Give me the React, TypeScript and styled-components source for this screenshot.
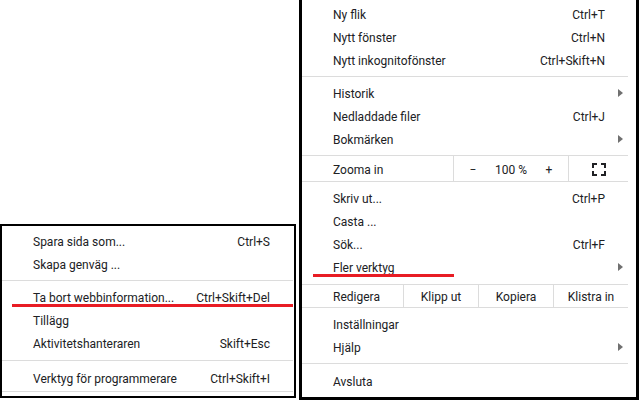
import React from 'react';
import styled, { createGlobalStyle } from 'styled-components';

const GlobalStyle = createGlobalStyle`
  html, body { margin: 0; padding: 0; background: #fff; }
  body { font-family: Roboto, "Noto Sans", sans-serif; font-size: 12px; color: #202124; }
`;

const Page = styled.div`
  width: 643px;
  height: 406px;
  overflow: hidden;
  display: flex;
  align-items: flex-start;
  background: #fff;
`;

const SubMenu = styled.div`
  position: relative;
  box-sizing: border-box;
  margin-top: 224px;
  width: 296px;
  border: 2px solid #000;
  padding: 3.5px 1px 4px 0;
  background: #fff;
`;

const MainMenu = styled.div`
  position: relative;
  box-sizing: border-box;
  margin-left: 3px;
  width: 340px;
  border: 3px solid #000;
  border-top: none;
  padding: 2.5px 8px 4.5px 0;
  background: #fff;
`;

const Item = styled.div<{ $right: number }>`
  display: grid;
  grid-template-columns: 1fr auto ${(p) => p.$right}px;
  align-items: center;
  box-sizing: border-box;
  height: 23px;
  padding: 2px 0 0 31px;
  white-space: nowrap;
  line-height: 21px;
`;

const Shortcut = styled.span`
  text-align: right;
`;

const ArrowCell = styled.span`
  display: flex;
  justify-content: flex-end;
  align-items: center;
  padding-right: 5px;
  margin-top: -2px;
`;

const Separator = styled.div<{ $top?: number; $bottom?: number }>`
  height: 0;
  border-top: 1px solid #dcdcdc;
  margin: ${(p) => p.$top ?? 4}px 0 ${(p) => p.$bottom ?? 5}px;
`;

const ControlRow = styled.div<{ $h: number; $top: number; $shift: number }>`
  display: flex;
  height: ${(p) => p.$h}px;
  border-top: 1px solid #dcdcdc;
  border-bottom: 1px solid #dcdcdc;
  margin: ${(p) => p.$top}px 0 5px;
  white-space: nowrap;
  & > * {
    box-sizing: border-box;
    padding-top: ${(p) => p.$shift}px;
  }
`;

const RowLabel = styled.div<{ $w: number }>`
  width: ${(p) => p.$w}px;
  padding-left: 31px;
  display: flex;
  align-items: center;
`;

const ZoomGroup = styled.div`
  width: 116px;
  border-left: 1px solid #dcdcdc;
  border-right: 1px solid #dcdcdc;
  display: grid;
  grid-template-columns: repeat(3, 1fr);
`;

const ZoomCell = styled.div`
  display: flex;
  align-items: center;
  justify-content: center;
`;

const FullCell = styled.div`
  flex: 1;
  display: flex;
  align-items: center;
  justify-content: center;
`;

const EditButton = styled.div`
  flex: 1;
  border-left: 1px solid #dcdcdc;
  display: flex;
  align-items: center;
  justify-content: center;
`;

const RedLine = styled.div<{ $top: number; $left: number; $width: number }>`
  position: absolute;
  top: ${(p) => p.$top}px;
  left: ${(p) => p.$left}px;
  width: ${(p) => p.$width}px;
  height: 3px;
  background: #e81c24;
`;

const Arrow = () => (
  <svg width="5" height="8" viewBox="0 0 5 8">
    <path d="M0 0 L5 4 L0 8 Z" fill="#707070" />
  </svg>
);

const FullscreenIcon = () => (
  <svg width="14" height="13" viewBox="0 0 14 13">
    <path
      d="M1 5 V1 H5 M9 1 H13 V5 M13 8 V12 H9 M5 12 H1 V8"
      fill="none"
      stroke="#202124"
      strokeWidth="2"
    />
  </svg>
);

type Entry = { label: string; shortcut?: string; arrow?: boolean };

const MenuItem = ({ e, right }: { e: Entry; right: number }) => (
  <Item $right={right}>
    <span>{e.label}</span>
    <Shortcut>{e.shortcut ?? ''}</Shortcut>
    <ArrowCell>{e.arrow ? <Arrow /> : null}</ArrowCell>
  </Item>
);

const main1: Entry[] = [
  { label: 'Ny flik', shortcut: 'Ctrl+T' },
  { label: 'Nytt fönster', shortcut: 'Ctrl+N' },
  { label: 'Nytt inkognitofönster', shortcut: 'Ctrl+Skift+N' },
];
const main2: Entry[] = [
  { label: 'Historik', arrow: true },
  { label: 'Nedladdade filer', shortcut: 'Ctrl+J' },
  { label: 'Bokmärken', arrow: true },
];
const main3: Entry[] = [
  { label: 'Skriv ut...', shortcut: 'Ctrl+P' },
  { label: 'Casta ...' },
  { label: 'Sök...', shortcut: 'Ctrl+F' },
  { label: 'Fler verktyg', arrow: true },
];
const main4: Entry[] = [
  { label: 'Inställningar' },
  { label: 'Hjälp', arrow: true },
];

const sub1: Entry[] = [
  { label: 'Spara sida som...', shortcut: 'Ctrl+S' },
  { label: 'Skapa genväg ...' },
];
const sub2: Entry[] = [
  { label: 'Ta bort webbinformation...', shortcut: 'Ctrl+Skift+Del' },
  { label: 'Tillägg' },
  { label: 'Aktivitetshanteraren', shortcut: 'Skift+Esc' },
];

export default function App() {
  return (
    <>
      <GlobalStyle />
      <Page>
        <SubMenu>
          {sub1.map((e) => (
            <MenuItem key={e.label} e={e} right={23} />
          ))}
          <Separator />
          {sub2.map((e) => (
            <MenuItem key={e.label} e={e} right={23} />
          ))}
          <Separator $top={5} $bottom={6} />
          <MenuItem e={{ label: 'Verktyg för programmerare', shortcut: 'Ctrl+Skift+I' }} right={23} />
          <Separator $top={1} $bottom={0} />
          <RedLine $top={78} $left={10} $width={281} />
        </SubMenu>
        <MainMenu>
          {main1.map((e) => (
            <MenuItem key={e.label} e={e} right={23} />
          ))}
          <Separator />
          {main2.map((e) => (
            <MenuItem key={e.label} e={e} right={23} />
          ))}
          <ControlRow $h={25} $top={4} $shift={3}>
            <RowLabel $w={151}>Zooma in</RowLabel>
            <ZoomGroup>
              <ZoomCell>−</ZoomCell>
              <ZoomCell>100 %</ZoomCell>
              <ZoomCell>+</ZoomCell>
            </ZoomGroup>
            <FullCell>
              <FullscreenIcon />
            </FullCell>
          </ControlRow>
          {main3.map((e) => (
            <MenuItem key={e.label} e={e} right={23} />
          ))}
          <ControlRow $h={22} $top={5} $shift={2}>
            <RowLabel $w={101}>Redigera</RowLabel>
            <EditButton>Klipp ut</EditButton>
            <EditButton>Kopiera</EditButton>
            <EditButton>Klistra in</EditButton>
          </ControlRow>
          {main4.map((e) => (
            <MenuItem key={e.label} e={e} right={23} />
          ))}
          <Separator $top={4} $bottom={6} />
          <MenuItem e={{ label: 'Avsluta' }} right={23} />
          <RedLine $top={274} $left={11} $width={141} />
        </MainMenu>
      </Page>
    </>
  );
}
